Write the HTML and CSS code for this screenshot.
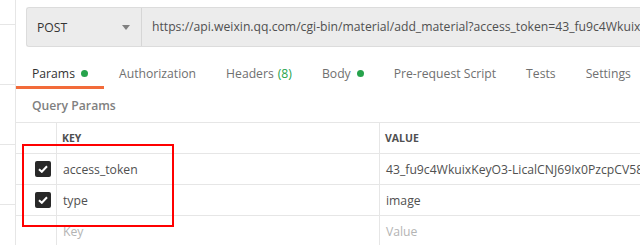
FILE: index.html
```html
<!DOCTYPE html>
<html>
<head>
<meta charset="utf-8">
<link rel="stylesheet" href="styles.css">
</head>
<body>
<div class="app">
  <aside class="sidebar">
    <div class="side-item first"></div>
    <div class="side-item"></div>
    <div class="side-item"></div>
    <div class="side-item"></div>
  </aside>
  <main class="main">
    <div class="request-bar">
      <div class="method">
        <span>POST</span>
        <svg class="caret" width="8" height="5" viewBox="0 0 8 5"><path d="M0 0H8L4 5Z" fill="#808080"/></svg>
      </div>
      <div class="url">https://api.weixin.qq.com/cgi-bin/material/add_material?access_token=43_fu9c4WkuixK</div>
    </div>
    <nav class="tabs">
      <div class="tab active">Params<span class="dot"></span></div>
      <div class="tab">Authorization</div>
      <div class="tab">Headers <span class="count">(8)</span></div>
      <div class="tab">Body<span class="dot"></span></div>
      <div class="tab">Pre-request Script</div>
      <div class="tab">Tests</div>
      <div class="tab">Settings</div>
    </nav>
    <div class="section-title">Query Params</div>
    <div class="table">
      <div class="row head">
        <div class="cell check"></div>
        <div class="cell key">KEY</div>
        <div class="cell value">VALUE</div>
      </div>
      <div class="row">
        <div class="cell check"><span class="box"><svg width="10" height="8" viewBox="0 0 10 8"><path d="M1 4.2L3.8 6.8L9 1.2" fill="none" stroke="#fff" stroke-width="2"/></svg></span></div>
        <div class="cell key">access_token</div>
        <div class="cell value">43_fu9c4WkuixKeyO3-LicalCNJ69Ix0PzcpCV58</div>
      </div>
      <div class="row">
        <div class="cell check"><span class="box"><svg width="10" height="8" viewBox="0 0 10 8"><path d="M1 4.2L3.8 6.8L9 1.2" fill="none" stroke="#fff" stroke-width="2"/></svg></span></div>
        <div class="cell key">type</div>
        <div class="cell value">image</div>
      </div>
      <div class="row">
        <div class="cell check"></div>
        <div class="cell key placeholder">Key</div>
        <div class="cell value placeholder">Value</div>
      </div>
      <div class="highlight"></div>
    </div>
  </main>
</div>
</body>
</html>
```

FILE: styles.css
```css
* { box-sizing: border-box; }
html, body { margin: 0; padding: 0; background: #fff; overflow: hidden; }
body {
  font-family: "Open Sans", "Noto Sans", sans-serif;
  font-size: 12.2px;
  color: #505050;
  width: 640px;
  height: 245px;
}
.app { display: flex; height: 245px; }
.sidebar {
  width: 16px;
  flex: 0 0 16px;
  border-right: 1px solid #e6e6e6;
  display: flex;
  flex-direction: column;
}
.side-item { height: 60px; border-bottom: 1px solid #e6e6e6; flex: 0 0 auto; }
.side-item.first { height: 25px; }
.main { flex: 1; min-width: 0; position: relative; }
.request-bar {
  margin: 7px 0 0 10px;
  height: 40px;
  display: flex;
  background: #ececec;
  border: 1px solid #dcdcdc;
  border-right: none;
  border-radius: 3px 0 0 3px;
  white-space: nowrap;
  overflow: hidden;
}
.method {
  width: 115px;
  flex: 0 0 115px;
  border-right: 1px solid #d6d6d6;
  display: flex;
  align-items: center;
  justify-content: space-between;
  padding: 0 11px 0 10px;
  color: #333;
}
.caret { display: block; }
.url {
  padding-left: 10px;
  line-height: 38px;
  color: #505050;
}
.tabs {
  display: flex;
  margin-top: 13px;
  height: 29px;
  white-space: nowrap;
}
.tab {
  padding: 0 15px 3px 15px;
  height: 29px;
  color: #707070;
  display: flex;
  align-items: center;
}
.tab.active {
  color: #333;
  border-bottom: 3px solid #f26b3a;
  padding: 0 16px 0 16px;
}
.dot {
  display: inline-block;
  width: 7px;
  height: 7px;
  border-radius: 50%;
  background: #26a34c;
  margin-left: 6px;
  margin-top: 1px;
}
.count { color: #26a34c; margin-left: 4px; }
.section-title {
  height: 33px;
  line-height: 33px;
  padding-left: 16px;
  color: #808080;
  font-weight: 600;
}
.table { position: relative; border-top: 1px solid #e6e6e6; }
.row {
  display: flex;
  height: 31px;
  border-bottom: 1px solid #e6e6e6;
}
.cell { display: flex; align-items: center; white-space: nowrap; }
.cell.check { width: 41px; flex: 0 0 41px; justify-content: flex-end; padding-right: 5px; border-right: 1px solid #e6e6e6; }
.cell.key { width: 323px; flex: 0 0 323px; padding-left: 6px; border-right: 1px solid #e6e6e6; }
.cell.value { flex: 1; padding-left: 6px; overflow: hidden; }
.row.head .cell.key, .row.head .cell.value { font-size: 10.5px; font-weight: 700; color: #505050; padding-left: 5px; }
.placeholder { color: #b4b4b4; }
.box {
  width: 16px;
  height: 16px;
  background: #282828;
  border-radius: 2px;
  display: flex;
  align-items: center;
  justify-content: center;
}
.box svg { display: block; }
.highlight {
  position: absolute;
  left: 6px;
  top: 21px;
  width: 152px;
  height: 83px;
  border: 2px solid #ff0000;
}
```
